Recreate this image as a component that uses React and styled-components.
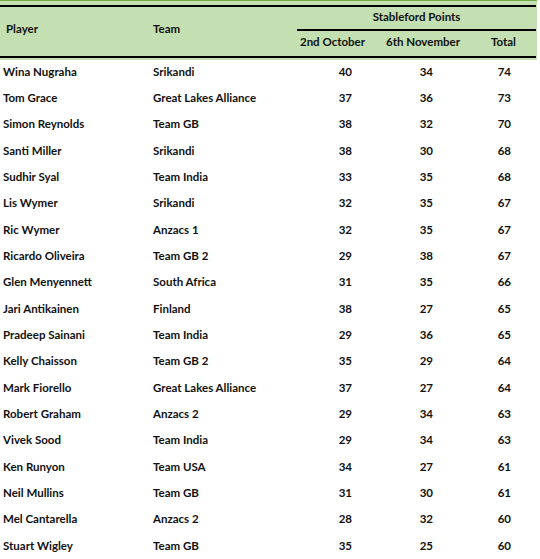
import React from "react";
import styled, { createGlobalStyle } from "styled-components";

const rows = [
    ["Wina Nugraha", "Srikandi", 40, 34, 74],
    ["Tom Grace", "Great Lakes Alliance", 37, 36, 73],
    ["Simon Reynolds", "Team GB", 38, 32, 70],
    ["Santi Miller", "Srikandi", 38, 30, 68],
    ["Sudhir Syal", "Team India", 33, 35, 68],
    ["Lis Wymer", "Srikandi", 32, 35, 67],
    ["Ric Wymer", "Anzacs 1", 32, 35, 67],
    ["Ricardo Oliveira", "Team GB 2", 29, 38, 67],
    ["Glen Menyennett", "South Africa", 31, 35, 66],
    ["Jari Antikainen", "Finland", 38, 27, 65],
    ["Pradeep Sainani", "Team India", 29, 36, 65],
    ["Kelly Chaisson", "Team GB 2", 35, 29, 64],
    ["Mark Fiorello", "Great Lakes Alliance", 37, 27, 64],
    ["Robert Graham", "Anzacs 2", 29, 34, 63],
    ["Vivek Sood", "Team India", 29, 34, 63],
    ["Ken Runyon", "Team USA", 34, 27, 61],
    ["Neil Mullins", "Team GB", 31, 30, 61],
    ["Mel Cantarella", "Anzacs 2", 28, 32, 60],
    ["Stuart Wigley", "Team GB", 35, 25, 60],
];

export default function App() {
    return (
        <>
            <Global />
            <Wrapper>
                <Head>
                    <HeadGrid>
                        <HeadCell>Player</HeadCell>
                        <HeadCell>Team</HeadCell>
                        <GroupCell>Stableford Points</GroupCell>
                        <SubCell>2nd October</SubCell>
                        <SubCell>6th November</SubCell>
                        <SubCell $pr={7}>Total</SubCell>
                    </HeadGrid>
                </Head>
                <Body>
                    {rows.map((r) => (
                        <Row key={r[0]}>
                            <TextCell $pl={3}>{r[0]}</TextCell>
                            <TextCell $pl={6}>{r[1]}</TextCell>
                            <NumCell $pr={16}>{r[2]}</NumCell>
                            <NumCell $pr={45}>{r[3]}</NumCell>
                            <NumCell $pr={25}>{r[4]}</NumCell>
                        </Row>
                    ))}
                </Body>
            </Wrapper>
        </>
    );
}

const Global = createGlobalStyle`
    body {
        margin: 0;
        background: #fff;
        font-family: Lato, "Liberation Sans", sans-serif;
        font-weight: 700;
        font-size: 11.5px;
        color: #111;
    }
`;

const Wrapper = styled.div`
    width: 537px;
`;

const Head = styled.div`
    background: #c4dfb2;
    border-top: 1px solid #70ad47;
    padding: 4px 1px 2px 0;
`;

const cols = "147px 150px 71px 110px 58px";

const HeadGrid = styled.div`
    display: grid;
    grid-template-columns: ${cols};
    grid-template-rows: 24px 25px;
    border-top: 2px solid #000;
    border-bottom: 2px solid #000;
`;

const HeadCell = styled.div`
    grid-row: 1 / 3;
    display: flex;
    align-items: center;
    padding-left: 6px;
    padding-bottom: 7px;
`;

const GroupCell = styled.div`
    grid-column: 3 / 6;
    display: flex;
    align-items: center;
    justify-content: center;
    padding-bottom: 4px;
    border-bottom: 2px solid #000;
`;

const SubCell = styled.div`
    display: flex;
    align-items: center;
    justify-content: center;
    padding-bottom: 5px;
    padding-right: ${(p) => p.$pr || 0}px;
`;

const Body = styled.div``;

const Row = styled.div`
    display: grid;
    grid-template-columns: ${cols};
    height: 26.33px;
    align-items: center;
`;

const TextCell = styled.div`
    padding-left: ${(p) => p.$pl}px;
    padding-bottom: 4px;
    white-space: nowrap;
`;

const NumCell = styled.div`
    text-align: right;
    padding-right: ${(p) => p.$pr}px;
    padding-bottom: 4px;
`;
